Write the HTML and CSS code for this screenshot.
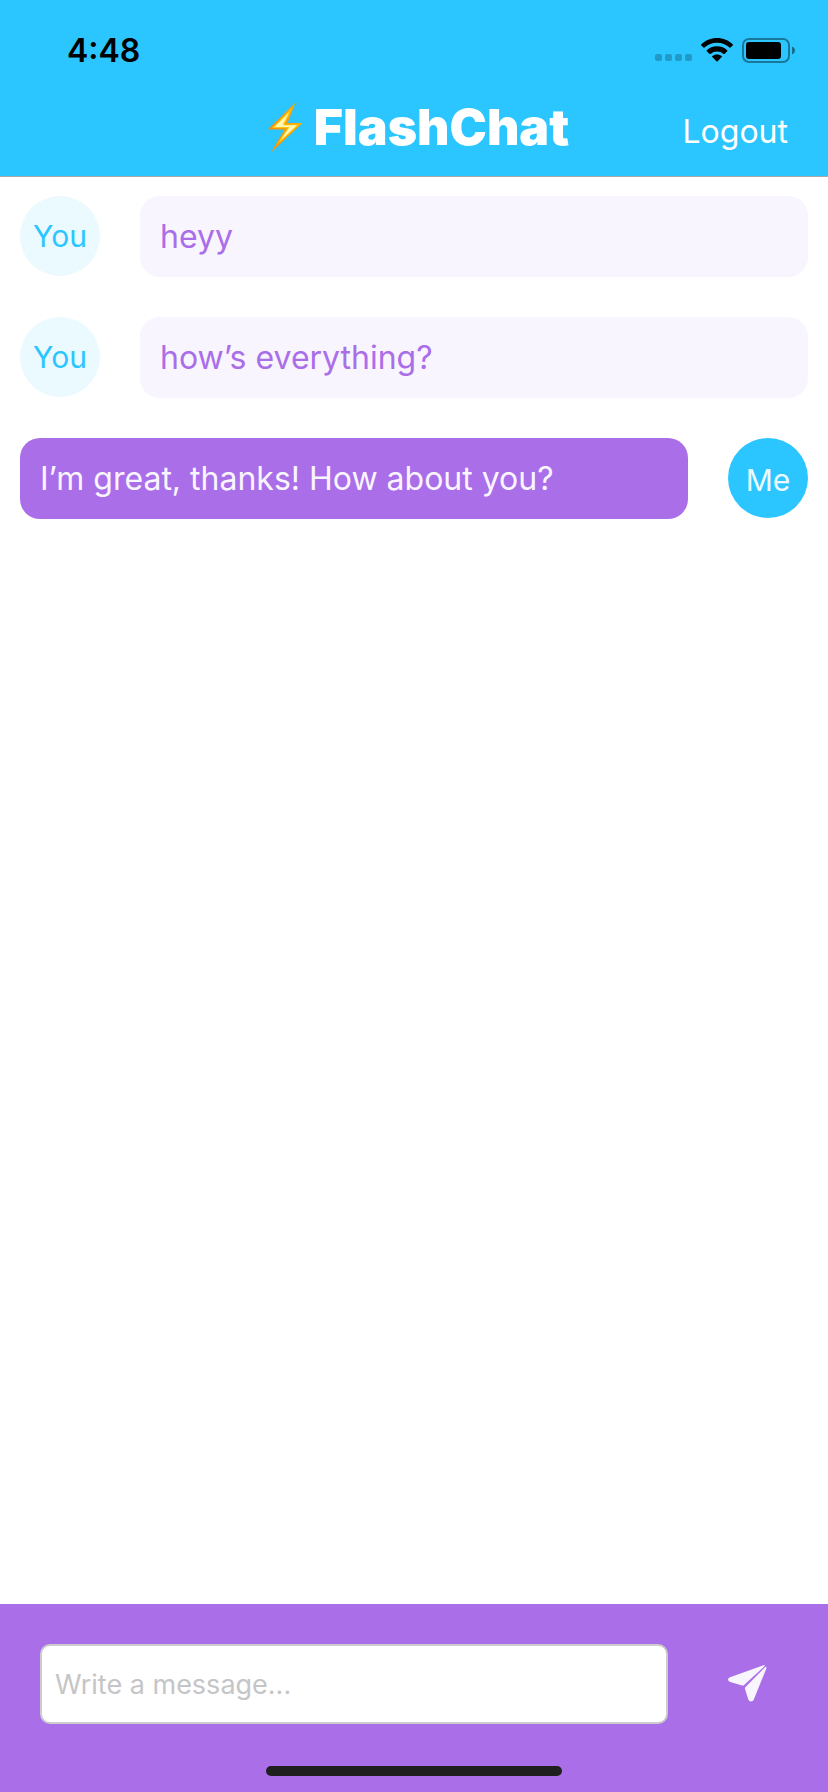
FILE: index.html
```html
<!DOCTYPE html>
<html lang="en">
<head>
<meta charset="utf-8">
<meta name="viewport" content="width=device-width, initial-scale=1">
<title>FlashChat</title>
<link rel="stylesheet" href="styles.css">
</head>
<body>
<div class="app">
  <header class="header">
    <div class="status">
      <time class="clock">4:48</time>
      <div class="indicators">
        <svg class="signal" width="37" height="24" viewBox="0 0 37 24" aria-label="No signal"><g fill="#000" fill-opacity=".22"><rect x="0" y="16" width="7" height="7" rx="2"/><rect x="10" y="16" width="7" height="7" rx="2"/><rect x="20" y="16" width="7" height="7" rx="2"/><rect x="30" y="16" width="7" height="7" rx="2"/></g></svg>
        <svg width="32" height="24" viewBox="0 0 32 24" aria-label="Wi-Fi"><path d="M16 0C22.200 0 27.700 2.400 31.700 6.300Q32.200 6.900 31.700 7.400L29.500 9.600Q29 10 28.500 9.600A18.500 18.500 0 0 0 3.500 9.600Q3 10 2.500 9.600L.3 7.400Q-.2 6.900.3 6.300C4.300 2.400 9.800 0 16 0ZM16 8.300C20.200 8.300 23.700 9.900 26.200 12.200Q26.700 12.800 26.200 13.300L23.500 15.900Q23 16.300 22.500 15.900A10.200 10.200 0 0 0 9.500 15.900Q9 16.300 8.500 15.900L5.800 13.300Q5.300 12.800 5.800 12.200C8.300 9.900 11.800 8.300 16 8.300ZM16 16.500C18 16.500 19.500 17.100 20.700 18.100Q21.200 18.600 20.700 19.100L16.600 23.200Q16 23.700 15.400 23.200L11.300 19.100Q10.800 18.600 11.300 18.100C12.500 17.100 14 16.500 16 16.500Z"/></svg>
        <svg class="battery" width="53" height="25" viewBox="0 0 53 25" aria-label="Battery"><rect x="1" y="1" width="46" height="23" rx="6" fill="none" stroke="#000" stroke-opacity=".4" stroke-width="2"/><rect x="4" y="4" width="35" height="17" rx="3"/><path d="M50 8.500C52 9.300 53 10.700 53 12.500S52 15.700 50 16.500Z" fill-opacity=".45"/></svg>
      </div>
    </div>
    <nav class="nav">
      <h1 class="title">
        <svg class="bolt" width="36" height="52" viewBox="0 0 36 52" aria-hidden="true"><defs><linearGradient id="bolt" x1="0" y1="0" x2="1" y2="0"><stop offset="0" stop-color="#ff8a00"/><stop offset=".5" stop-color="#f79c08"/><stop offset="1" stop-color="#ffae00"/></linearGradient></defs><path d="M28.500 1.500 1 28.500H17.500L4 51.500 35.500 22H20.500Z" fill="url(#bolt)"/><path d="M25.500 6.500 5 27H20.500L9.500 44.500 32 23.500H17.500Z" fill="#ffc80a"/><path d="M22 11.500 7.500 26H22.500L13.500 39.500 30 24.300H15.500Z" fill="#fff8b8"/></svg>
        <span>FlashChat</span>
      </h1>
      <button class="logout" type="button">Logout</button>
    </nav>
  </header>
  <main class="messages">
    <article class="row"><div class="avatar">You</div><p class="bubble">heyy</p></article>
    <article class="row"><div class="avatar">You</div><p class="bubble">how’s everything?</p></article>
    <article class="row mine"><p class="bubble">I’m great, thanks! How about you?</p><div class="avatar">Me</div></article>
  </main>
  <footer class="footer">
    <form class="composer">
      <input class="field" type="text" placeholder="Write a message..." aria-label="Write a message">
      <button class="send" type="button" aria-label="Send"><svg width="40" height="38" viewBox="0 0 40 38" fill="#f8f5fe"><path d="M34.800.5Q36.300 0 37.200.6L15.800 20.300Q15.200 20.800 14.200 20.500L2.200 17Q0 16.300 0 14.500 0 13 2 12.300Z"/><path d="M38.400 2Q38.600 2.800 38.200 3.900L25.800 34.500Q25 36.500 23 36.500 21 36.500 20.300 34.500L17 24Q16.700 22.800 17.500 22L37.300 2Z"/></svg></button>
    </form>
    <div class="home"></div>
  </footer>
</div>
</body>
</html>
```

FILE: styles.css
```css
* { box-sizing: border-box; }

body {
  margin: 0;
  background: #fff;
  font-family: Inter, "Liberation Sans", sans-serif;
}

.app {
  display: flex;
  flex-direction: column;
  min-height: 100vh;
}

.header {
  background: #2bc6ff;
  border-bottom: 1px solid #a7abad;
}

.status {
  display: flex;
  align-items: center;
  justify-content: space-between;
  height: 88px;
  padding: 12px 33px 0 67px;
}

.clock {
  font-size: 32px;
  font-weight: 600;
}

.indicators {
  display: flex;
  align-items: center;
  gap: 9px;
}

.nav {
  display: grid;
  grid-template-columns: 1fr auto 1fr;
  align-items: center;
  height: 88px;
  padding: 0 40px;
}

.title {
  grid-column: 2;
  display: flex;
  align-items: center;
  gap: 11px;
  margin: 0;
  padding: 0 0 10px 8px;
  color: #fff;
  font-size: 50px;
  font-weight: 900;
  line-height: 60px;
}

.logout {
  justify-self: end;
  padding: 0;
  border: 0;
  background: none;
  color: #fff;
  font: 400 32px/40px Inter, "Liberation Sans", sans-serif;
}

.messages {
  flex: 1;
  display: flex;
  flex-direction: column;
  gap: 40px;
  padding: 19px 20px;
}

.row {
  display: flex;
  align-items: flex-start;
  gap: 40px;
}

.avatar {
  flex: none;
  display: grid;
  place-items: center;
  width: 80px;
  height: 80px;
  border-radius: 50%;
  background: #ebfafe;
  color: #2bc6ff;
  font-size: 30px;
}

.bubble {
  flex: 1;
  margin: 0;
  padding: 20px;
  border-radius: 20px;
  background: #f8f5fe;
  color: #aa6ee9;
  font-size: 32px;
  line-height: 41px;
}

.mine .bubble {
  background: #aa6ee9;
  color: #f8f5fe;
}

.mine .avatar {
  padding-top: 4px;
  background: #2bc6ff;
  color: #ebfafe;
}

.footer {
  padding: 40px 40px 16px;
  background: #aa6ee9;
}

.composer {
  display: flex;
  gap: 40px;
}

.field {
  flex: 1;
  min-width: 0;
  height: 80px;
  padding: 0 13px;
  border: 2px solid #ccc;
  border-radius: 10px;
  background: #fff;
  color: #333;
  font: 400 27px Inter, "Liberation Sans", sans-serif;
}

.field::placeholder { color: #c5c5c7; opacity: 1; }

.send {
  display: grid;
  place-items: center;
  width: 80px;
  padding: 0;
  border: 0;
  background: none;
}

.home {
  width: 296px;
  height: 10px;
  margin: 42px auto 0;
  border-radius: 5px;
  background: #1f1f1f;
}
```
